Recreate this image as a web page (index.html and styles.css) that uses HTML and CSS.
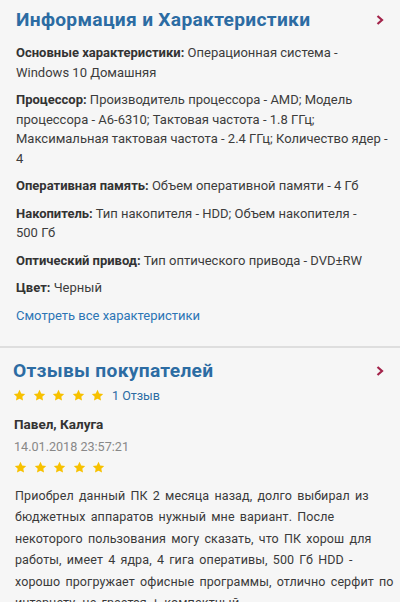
FILE: index.html
```html
<!DOCTYPE html>
<html lang="ru">
<head>
<meta charset="utf-8">
<link rel="stylesheet" href="styles.css">
</head>
<body>
<section class="block info">
  <div class="block-head">
    <h2 class="block-title">Информация и Характеристики</h2>
    <svg class="chev" viewBox="0 0 8 10" width="8" height="10"><path d="M1.5 1 L6 5 L1.5 9" fill="none" stroke="#a3234a" stroke-width="2.2"/></svg>
  </div>
  <p class="spec"><b>Основные характеристики:</b> Операционная система - Windows 10 Домашняя</p>
  <p class="spec"><b>Процессор:</b> Производитель процессора - AMD; Модель процессора - A6-6310; Тактовая частота - 1.8 ГГц; Максимальная тактовая частота - 2.4 ГГц; Количество ядер - 4</p>
  <p class="spec"><b>Оперативная память:</b> Объем оперативной памяти - 4 Гб</p>
  <p class="spec"><b>Накопитель:</b> Тип накопителя - HDD; Объем накопителя - 500&nbsp;Гб</p>
  <p class="spec"><b>Оптический привод:</b> Тип оптического привода - DVD±RW</p>
  <p class="spec"><b>Цвет:</b> Черный</p>
  <a class="more" href="#">Смотреть все характеристики</a>
</section>
<section class="block reviews">
  <div class="block-head">
    <h2 class="block-title">Отзывы покупателей</h2>
    <svg class="chev" viewBox="0 0 8 10" width="8" height="10"><path d="M1.5 1 L6 5 L1.5 9" fill="none" stroke="#a3234a" stroke-width="2.2"/></svg>
  </div>
  <div class="rating">
    <div class="stars">
      <svg class="star" viewBox="0 0 24 24"><path d="M12 1.5l3.2 6.6 7.3 1-5.3 5.1 1.3 7.2L12 18l-6.5 3.4 1.3-7.2L1.5 9.1l7.3-1z"/></svg>
      <svg class="star" viewBox="0 0 24 24"><path d="M12 1.5l3.2 6.6 7.3 1-5.3 5.1 1.3 7.2L12 18l-6.5 3.4 1.3-7.2L1.5 9.1l7.3-1z"/></svg>
      <svg class="star" viewBox="0 0 24 24"><path d="M12 1.5l3.2 6.6 7.3 1-5.3 5.1 1.3 7.2L12 18l-6.5 3.4 1.3-7.2L1.5 9.1l7.3-1z"/></svg>
      <svg class="star" viewBox="0 0 24 24"><path d="M12 1.5l3.2 6.6 7.3 1-5.3 5.1 1.3 7.2L12 18l-6.5 3.4 1.3-7.2L1.5 9.1l7.3-1z"/></svg>
      <svg class="star" viewBox="0 0 24 24"><path d="M12 1.5l3.2 6.6 7.3 1-5.3 5.1 1.3 7.2L12 18l-6.5 3.4 1.3-7.2L1.5 9.1l7.3-1z"/></svg>
    </div>
    <span class="count">1 Отзыв</span>
  </div>
  <div class="review">
    <div class="author">Павел, Калуга</div>
    <div class="date">14.01.2018 23:57:21</div>
    <div class="stars review-stars">
      <svg class="star" viewBox="0 0 24 24"><path d="M12 1.5l3.2 6.6 7.3 1-5.3 5.1 1.3 7.2L12 18l-6.5 3.4 1.3-7.2L1.5 9.1l7.3-1z"/></svg>
      <svg class="star" viewBox="0 0 24 24"><path d="M12 1.5l3.2 6.6 7.3 1-5.3 5.1 1.3 7.2L12 18l-6.5 3.4 1.3-7.2L1.5 9.1l7.3-1z"/></svg>
      <svg class="star" viewBox="0 0 24 24"><path d="M12 1.5l3.2 6.6 7.3 1-5.3 5.1 1.3 7.2L12 18l-6.5 3.4 1.3-7.2L1.5 9.1l7.3-1z"/></svg>
      <svg class="star" viewBox="0 0 24 24"><path d="M12 1.5l3.2 6.6 7.3 1-5.3 5.1 1.3 7.2L12 18l-6.5 3.4 1.3-7.2L1.5 9.1l7.3-1z"/></svg>
      <svg class="star" viewBox="0 0 24 24"><path d="M12 1.5l3.2 6.6 7.3 1-5.3 5.1 1.3 7.2L12 18l-6.5 3.4 1.3-7.2L1.5 9.1l7.3-1z"/></svg>
    </div>
    <p class="text">Приобрел данный ПК 2 месяца назад, долго выбирал из бюджетных аппаратов нужный мне вариант. После некоторого пользования могу сказать, что ПК хорош для работы, имеет 4 ядра, 4 гига оперативы, 500 Гб HDD - хорошо прогружает офисные программы, отлично серфит по интернету, не греется + компактный.</p>
  </div>
</section>
</body>
</html>
```
FILE: styles.css
```css
html, body {
  margin: 0;
  padding: 0;
  background: #f6f6f6;
}
body {
  font-family: Roboto, "Noto Sans", sans-serif;
  color: #333;
  font-size: 13px;
  width: 400px;
  overflow: hidden;
}
.block {
  padding: 6px 16px 0 16px;
}
.info {
  border-bottom: 2px solid #dedede;
  padding-bottom: 20px;
  padding-right: 9px;
}
.info .block-head {
  padding-right: 7px;
}
.block-head {
  display: flex;
  justify-content: space-between;
  align-items: center;
}
.block-title {
  margin: 0;
  font-size: 19.2px;
  font-weight: 700;
  color: #2c6ca3;
  line-height: 28px;
  letter-spacing: 0.3px;
}
.spec {
  margin: 9px 0 8px;
  line-height: 19.5px;
  color: #3c3c3c;
}
.spec + .spec {
  margin-top: 0;
}
.spec b {
  color: #333;
}
.more {
  display: block;
  color: #2c75b5;
  text-decoration: none;
  line-height: 20px;
  margin-top: 6px;
}
.reviews {
  padding-top: 9px;
  padding-left: 13px;
  padding-right: 16px;
}
.rating {
  display: flex;
  align-items: center;
  gap: 8px;
  height: 22px;
}
.stars {
  display: flex;
  gap: 6.5px;
  align-items: center;
}
.star {
  width: 13px;
  height: 13px;
  fill: #f7c100;
}
.count {
  color: #2c6ca3;
  font-size: 12.5px;
}
.review {
  padding-left: 1px;
}
.author {
  font-weight: 700;
  font-size: 13.5px;
  margin-top: 6px;
  line-height: 22px;
  color: #333;
}
.date {
  color: #888;
  font-size: 12.6px;
  line-height: 24px;
}
.review-stars {
  height: 18px;
}
.text {
  margin: 8px -14px 0 0;
  font-size: 12.5px;
  line-height: 21.5px;
  color: #3a3a3a;
  padding-left: 1px;
  letter-spacing: 0.1px;
  word-spacing: 2px;
}
```
